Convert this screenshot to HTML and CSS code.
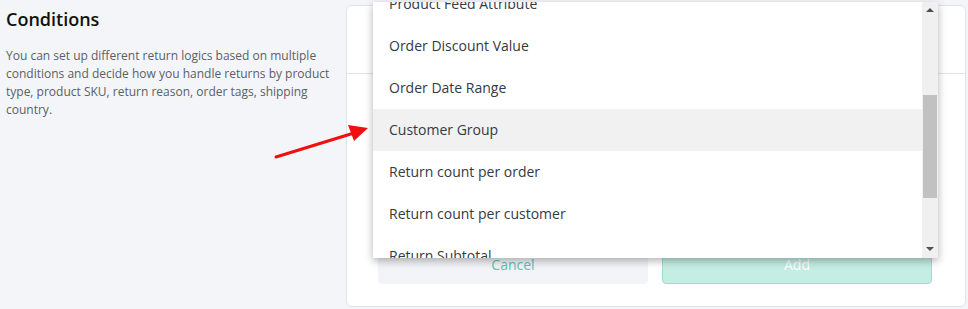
FILE: index.html
```html
<!DOCTYPE html>
<html lang="en">
<head>
<meta charset="UTF-8" />
<meta name="viewport" content="width=device-width, initial-scale=1" />
<title>Conditions</title>
<link rel="stylesheet" href="styles.css">
</head>
<body>
  <div class="page">
    <div class="intro">
      <h2>Conditions</h2>
      <p>You can set up different return logics based on multiple conditions and decide how you handle returns by product type, product SKU, return reason, order tags, shipping country.</p>
    </div>

    <div class="card">
      <div class="card-head"></div>
      <div class="card-body">
        <div class="actions">
          <button class="btn btn-cancel">Cancel</button>
          <button class="btn btn-add">Add</button>
        </div>
      </div>

      <!-- dropdown opened over the card -->
      <div class="dropdown">
        <ul class="options">
          <li>Product Feed Attribute</li>
          <li>Order Discount Value</li>
          <li>Order Date Range</li>
          <li class="hover">Customer Group</li>
          <li>Return count per order</li>
          <li>Return count per customer</li>
          <li>Return Subtotal</li>
        </ul>
        <div class="scrollbar">
          <span class="arrow-up"></span>
          <span class="thumb"></span>
          <span class="arrow-down"></span>
        </div>
      </div>
    </div>

    <svg class="pointer" width="100" height="40" viewBox="0 0 100 40">
      <line x1="2" y1="36" x2="80" y2="12" stroke="#f01010" stroke-width="3" stroke-linecap="round" />
      <polygon points="94,7 74,4 80,20" fill="#f01010" />
    </svg>
  </div>
</body>
</html>
```

FILE: styles.css
```css
body {
  margin: 0;
  background: #f4f5f8;
  font-family: 'Open Sans', 'Liberation Sans', sans-serif;
  color: #212b36;
}
.page {
  position: relative;
  display: flex;
  height: 309px;
}
.intro {
  width: 340px;
  padding: 0 6px;
  box-sizing: border-box;
}
.intro h2 {
  margin: 7px 0 0;
  font-size: 18px;
  font-weight: 600;
  color: #111;
}
.intro p {
  margin: 16px 0 0;
  font-size: 12px;
  line-height: 18px;
  color: #5a5f66;
}
.card {
  position: relative;
  margin: 5px 2px 2px 6px;
  flex: 1;
  background: #fff;
  border: 1px solid #e1e3ea;
  border-radius: 6px;
  display: flex;
  flex-direction: column;
}
.card-head {
  height: 67px;
  border-bottom: 1px solid #e1e3ea;
}
.card-body {
  flex: 1;
  display: flex;
  flex-direction: column;
  justify-content: flex-end;
  padding: 0 33px 22px 31px;
}
.actions {
  display: flex;
  gap: 14px;
}
.btn {
  flex: 1;
  height: 38px;
  border-radius: 4px;
  font-family: inherit;
  font-size: 14px;
  padding-bottom: 2px;
  cursor: pointer;
}
.btn-cancel {
  background: #f3f4f7;
  border: 1px solid #f3f4f7;
  color: #5cc6b0;
}
.btn-add {
  background: #c4ede3;
  border: 1px solid #9fdecf;
  color: #fff;
}
.dropdown {
  position: absolute;
  top: -4px;
  left: 26px;
  width: 565px;
  height: 256px;
  background: #fff;
  box-shadow: 0 3px 8px rgba(0,0,0,0.3);
  display: flex;
  overflow: hidden;
}
.options {
  flex: 1;
  list-style: none;
  margin: -19px 0 0;
  padding: 0;
}
.options li {
  height: 42px;
  line-height: 42px;
  padding-left: 16px;
  font-size: 14px;
  color: #333a44;
}
.options li.hover {
  background: #f1f1f1;
}
.scrollbar {
  position: relative;
  width: 16px;
  background: #f0f0f0;
}
.thumb {
  position: absolute;
  left: 1px;
  right: 1px;
  top: 93px;
  height: 103px;
  background: #c1c1c1;
}
.arrow-up, .arrow-down {
  position: absolute;
  left: 4px;
  width: 0;
  height: 0;
  border-left: 4px solid transparent;
  border-right: 4px solid transparent;
}
.arrow-up {
  top: 6px;
  border-bottom: 4px solid #505050;
}
.arrow-down {
  bottom: 7px;
  border-top: 4px solid #505050;
}
.pointer {
  position: absolute;
  left: 274px;
  top: 121px;
}
```
